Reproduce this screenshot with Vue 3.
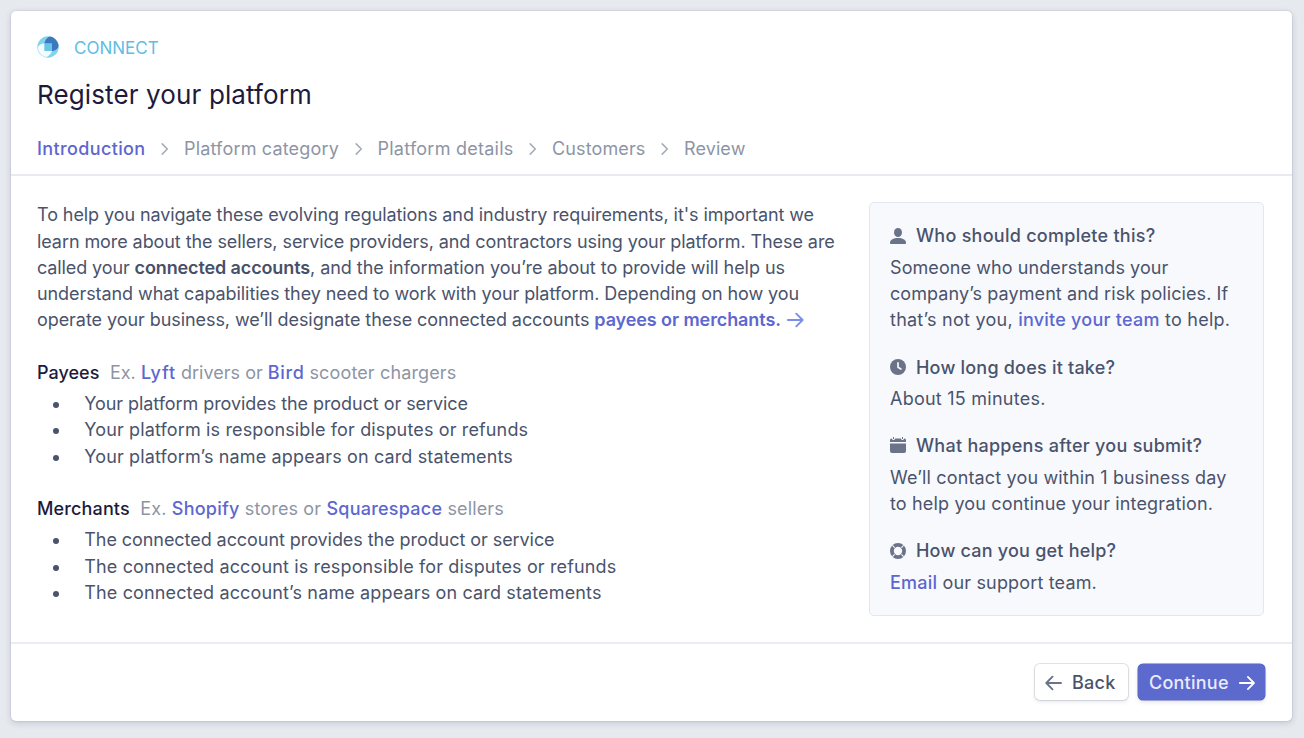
<script setup>
const steps = [
  { label: 'Introduction', cls: 'current' },
  { label: 'Platform category', cls: 'category' },
  { label: 'Platform details', cls: 'details' },
  { label: 'Customers', cls: 'customers' },
  { label: 'Review', cls: 'review' },
]
</script>

<template>
  <main class="page">
    <section class="card">
      <header class="head">
        <div class="brand">
          <svg class="logo" viewBox="0 0 22 22">
            <defs>
              <clipPath id="disc"><circle cx="11" cy="11" r="10.7" /></clipPath>
            </defs>
            <g clip-path="url(#disc)">
              <rect width="22" height="22" fill="#82d3ee" />
              <path d="M0 13C1 9.500 4 7.500 7.500 7.500V15H15C14 18.500 11 20.500 8 22H0Z" fill="#f4fcfe" />
              <path d="M0 12C0 17 4 22 10 22L11 20.800C6 20.800 2 17.500 1 12Z" fill="#b5e8f7" />
              <path d="M7.500 7.500C8 3.500 11 .5 14.500 0H22V9C21.500 12.500 18.500 15 15 15V7.500Z" fill="#3b78bd" />
              <rect x="7.500" y="7.500" width="7.500" height="7.500" fill="#68c6e8" />
            </g>
          </svg>
          <span>CONNECT</span>
        </div>
        <h1>Register your platform</h1>
        <nav class="steps">
          <template v-for="(step, i) in steps" :key="step.label">
            <svg v-if="i" class="chevron" viewBox="0 0 8 12"><path d="M1.200 .9 6.300 6 1.200 11.100" /></svg>
            <span :class="step.cls">{{ step.label }}</span>
          </template>
        </nav>
      </header>

      <div class="body">
        <div class="copy">
          <p class="intro">
            <span class="line a">To help you navigate these evolving regulations and industry requirements, it's important we</span>
            <span class="line a">learn more about the sellers, service providers, and contractors using your platform. These are</span>
            <span class="line c"><span class="c1">called your <strong>connected accounts</strong></span>, and the information you’re about to provide will help us</span>
            <span class="line a">understand what capabilities they need to work with your platform. Depending on how you</span>
            <span class="line b">operate your business, we’ll designate these connected accounts <a class="strong-link">payees or merchants.<svg class="go" viewBox="0 0 17 16"><path d="M.8 8H15.500M9.300 1.700 15.600 8 9.300 14.300" /></svg></a></span>
          </p>

          <h2 class="payees"><b>Payees</b><span>Ex. <a class="lyft">Lyft</a> drivers or <a class="bird">Bird</a> <i>scooter chargers</i></span></h2>
          <ul>
            <li class="b">Your platform provides the product or service</li>
            <li>Your platform is responsible for disputes or refunds</li>
            <li>Your platform’s name appears on card statements</li>
          </ul>

          <h2 class="merchants"><b>Merchants</b><span>Ex. <a>Shopify</a> stores or <a>Squarespace</a> sellers</span></h2>
          <ul>
            <li class="b">The connected account provides the product or service</li>
            <li>The connected account is responsible for disputes or refunds</li>
            <li>The connected account’s name appears on card statements</li>
          </ul>
        </div>

        <aside class="panel">
          <div class="item">
            <h3><svg viewBox="0 0 16 16"><ellipse cx="8" cy="4.500" rx="4" ry="4.500" /><path d="M0 14.300C.6 11.600 3.200 10 8 10S15.400 11.600 16 14.300V15.200Q16 16 15.200 16H.8Q0 16 0 15.200Z" /></svg>Who should complete this?</h3>
            <p><span class="line s1">Someone who understands your</span><span class="line s1">company’s payment and risk policies. If</span><span class="line s2">that’s not you, <a>invite your team</a> to help.</span></p>
          </div>
          <div class="item">
            <h3 class="tight"><svg viewBox="0 0 16 16"><circle cx="8" cy="8" r="8" /><path class="cut" d="M8 3.800V8.300L10.900 10" /></svg>How long does it take?</h3>
            <p><span class="line s2">About 15 minutes.</span></p>
          </div>
          <div class="item">
            <h3><svg class="cal" viewBox="0 0 16 16"><path d="M0 5V3Q0 1.500 1.500 1.500H2A1.500 1.500 0 0 0 5 1.500H11A1.500 1.500 0 0 0 14 1.500H14.500Q16 1.500 16 3V5ZM0 6.500H16V14Q16 16 14 16H2Q0 16 0 14Z" /><path d="M3 0H4V2H3ZM12 0H13V2H12Z" /></svg>What happens after you submit?</h3>
            <p><span class="line s3">We’ll contact you within 1 business day</span><span class="line s3">to help you continue your integration.</span></p>
          </div>
          <div class="item">
            <h3 class="tight"><svg viewBox="0 0 16 16"><circle class="ring" cx="8" cy="8" r="6.1" /><path class="slit" d="M2.700 2.700 4.300 4.300M11.700 11.700 13.300 13.300M13.300 2.700 11.700 4.300M4.300 11.700 2.700 13.300" /></svg>How can you get help?</h3>
            <p><span class="line s3"><a>Email</a> our support team.</span></p>
          </div>
        </aside>
      </div>

      <footer class="foot">
        <button class="back"><svg viewBox="0 0 17 16"><path d="M16 8H1.500M7.500 1.700 1.300 8 7.500 14.300" /></svg>Back</button>
        <button class="next">Continue<svg viewBox="0 0 17 16"><path d="M.8 8H15.500M9.300 1.700 15.600 8 9.300 14.300" /></svg></button>
      </footer>
    </section>
  </main>
</template>

<style>
body {
  background: #e6e9ee;
}
</style>

<style scoped>
.page {
  box-sizing: border-box;
  height: 738px;
  padding: 11px 12px 17px 11px;
  font: 400 18px/26.25px Inter, "Liberation Sans", sans-serif;
  color: #4a536c;
}
.card {
  box-sizing: border-box;
  height: 710px;
  display: flex;
  flex-direction: column;
  background: #fff;
  border-radius: 5px;
  box-shadow: 0 0 0 1px rgba(60, 66, 110, .07), 0 2px 6px rgba(60, 66, 110, .2);
}
h1, h2, h3, p, ul {
  margin: 0;
  font-weight: 400;
  font-size: inherit;
}
i {
  font-style: normal;
}
a {
  color: #5c67cf;
  font-weight: 500;
  letter-spacing: .24px;
}
path {
  stroke-linecap: round;
  stroke-linejoin: round;
}
.head {
  box-sizing: border-box;
  height: 165px;
  padding: 24px 26px 0;
  border-bottom: 2px solid #e7ebf0;
}
.brand {
  display: flex;
  align-items: center;
  height: 26px;
  color: #5dbde2;
  font-size: 17px;
}
.logo {
  width: 22px;
  height: 22px;
  margin: -2px 15px 0 0;
}
h1 {
  margin-top: 17px;
  font-size: 26px;
  line-height: 34px;
  letter-spacing: .124px;
  color: #1d1b3d;
}
.steps {
  display: flex;
  align-items: center;
  margin-top: 24px;
  color: #8d95a5;
}
.steps .current {
  color: #5c67cf;
  font-weight: 500;
  letter-spacing: .37px;
}
.category { letter-spacing: .176px; }
.details { letter-spacing: .247px; }
.customers { letter-spacing: .128px; }
.review { letter-spacing: .109px; }
.chevron {
  width: 8px;
  height: 12px;
  margin: 0 15px 0 15.500px;
  fill: none;
  stroke: #a3aab8;
  stroke-width: 1.5;
}
.body {
  display: flex;
  justify-content: space-between;
  height: 467px;
  padding: 0 28px 0 26px;
}
.copy {
  padding-top: 26.500px;
}
.line {
  display: block;
  white-space: nowrap;
}
.a { letter-spacing: -.079px; }
.b { letter-spacing: -.062px; }
.c { letter-spacing: -.039px; }
.c1 { letter-spacing: -.116px; }
strong {
  font-weight: 600;
  color: #475069;
}
.strong-link {
  font-weight: 600;
  letter-spacing: -.092px;
}
.go {
  width: 17px;
  height: 16px;
  margin-left: 6px;
  vertical-align: -1.500px;
  fill: none;
  stroke: #7b8ee8;
  stroke-width: 1.9;
}
h2 {
  display: flex;
  margin-top: 26px;
  color: #8d95a5;
  letter-spacing: .14px;
  white-space: pre;
}
h2 b {
  margin-right: 10.500px;
  font-weight: 500;
  color: #1d1b3d;
}
.payees { letter-spacing: .02px; }
.payees i { letter-spacing: .14px; }
.lyft { letter-spacing: .777px; }
.bird { letter-spacing: .598px; }
ul {
  margin-top: 5.250px;
  padding: 0;
  list-style: none;
}
li {
  display: flex;
  align-items: center;
  letter-spacing: .14px;
}
li.b { letter-spacing: -.063px; }
li::before {
  content: "";
  width: 6px;
  height: 6px;
  margin: 2px 25.750px 0 15.500px;
  border-radius: 50%;
  background: #4a536c;
}
.panel {
  box-sizing: border-box;
  width: 395.500px;
  height: 414px;
  margin-top: 26px;
  padding: 20.500px 20px 0 20.500px;
  border: 1px solid #e2e6ee;
  border-radius: 5px;
  background: #f8f9fd;
}
.item + .item {
  margin-top: 21px;
}
h3 {
  display: flex;
  align-items: center;
  margin-bottom: 5.250px;
  font-weight: 500;
  letter-spacing: .27px;
}
h3.tight { letter-spacing: .21px; }
h3 svg {
  width: 16px;
  height: 16px;
  margin: -1px 10px 0 0;
  fill: #6b7388;
}
h3 .cal {
  margin-top: -3px;
}
.cut {
  fill: none;
  stroke: #f8f9fd;
  stroke-width: 1.7;
}
.ring {
  fill: none;
  stroke: #6b7388;
  stroke-width: 3.8;
}
.slit {
  stroke: #f8f9fd;
  stroke-width: 1.1;
}
.s1 { letter-spacing: .08px; }
.s2 { letter-spacing: .245px; }
.s3 { letter-spacing: .155px; }
.foot {
  box-sizing: border-box;
  height: 79px;
  flex: none;
  display: flex;
  justify-content: flex-end;
  gap: 10px;
  padding: 20px 27px 0;
  border-top: 2px solid #e9edf1;
}
button {
  box-sizing: border-box;
  display: flex;
  align-items: center;
  height: 36px;
  padding: 1px 10px 0;
  border: 0;
  border-radius: 5px;
  font: 500 18px/26px Inter, "Liberation Sans", sans-serif;
  letter-spacing: .24px;
}
button svg {
  width: 17px;
  height: 16px;
  fill: none;
  stroke-width: 1.9;
}
.back {
  width: 93px;
  background: #fff;
  color: #4a536c;
  box-shadow: 0 0 0 1px rgba(60, 66, 87, .14), 0 2px 4px rgba(60, 66, 87, .12);
}
.back svg {
  margin-right: 10px;
  stroke: #6b7388;
}
.next {
  width: 127px;
  padding-left: 11px;
  background: #5c69cd;
  color: #e9ebff;
  box-shadow: 0 0 0 .5px #5560bd, 0 2px 4px rgba(60, 66, 87, .16);
}
.next svg {
  margin-left: 10px;
  stroke: #fff;
}
</style>
